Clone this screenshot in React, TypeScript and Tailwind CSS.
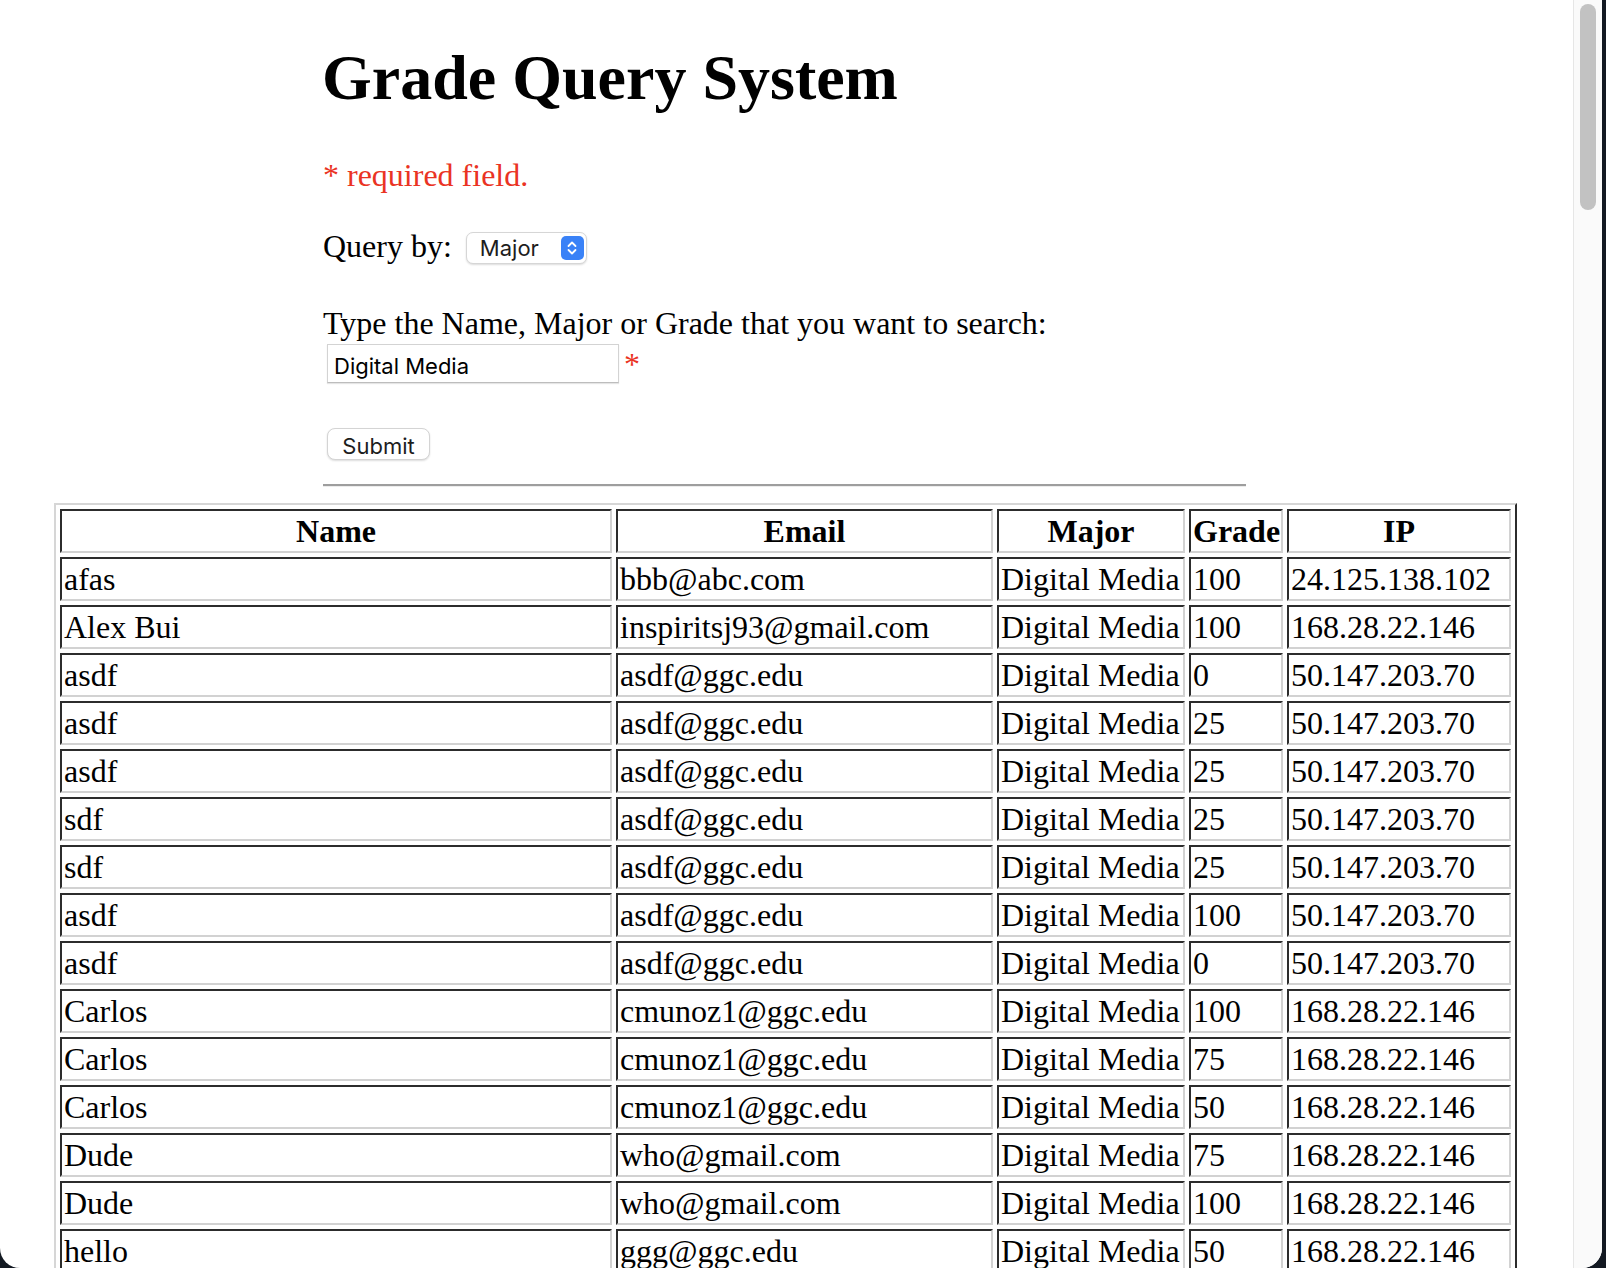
import React from "react";

const rows = [
    ["afas", "bbb@abc.com", "Digital Media", "100", "24.125.138.102"],
    ["Alex Bui", "inspiritsj93@gmail.com", "Digital Media", "100", "168.28.22.146"],
    ["asdf", "asdf@ggc.edu", "Digital Media", "0", "50.147.203.70"],
    ["asdf", "asdf@ggc.edu", "Digital Media", "25", "50.147.203.70"],
    ["asdf", "asdf@ggc.edu", "Digital Media", "25", "50.147.203.70"],
    ["sdf", "asdf@ggc.edu", "Digital Media", "25", "50.147.203.70"],
    ["sdf", "asdf@ggc.edu", "Digital Media", "25", "50.147.203.70"],
    ["asdf", "asdf@ggc.edu", "Digital Media", "100", "50.147.203.70"],
    ["asdf", "asdf@ggc.edu", "Digital Media", "0", "50.147.203.70"],
    ["Carlos", "cmunoz1@ggc.edu", "Digital Media", "100", "168.28.22.146"],
    ["Carlos", "cmunoz1@ggc.edu", "Digital Media", "75", "168.28.22.146"],
    ["Carlos", "cmunoz1@ggc.edu", "Digital Media", "50", "168.28.22.146"],
    ["Dude", "who@gmail.com", "Digital Media", "75", "168.28.22.146"],
    ["Dude", "who@gmail.com", "Digital Media", "100", "168.28.22.146"],
    ["hello", "ggg@ggc.edu", "Digital Media", "50", "168.28.22.146"],
];

const headers = [
    { label: "Name", width: "w-[552px]" },
    { label: "Email", width: "w-[377px]" },
    { label: "Major", width: "w-[188px]" },
    { label: "Grade", width: "w-[94px]" },
    { label: "IP", width: "w-[224px]" },
];

const cellBorder =
    "border-2 border-solid border-t-[#2c2c2c] border-l-[#2c2c2c] border-r-[#d2d2d2] border-b-[#d2d2d2] p-[2px] leading-[36px]";

function SelectControl() {
    return (
        <div className="ml-[14px] mt-[4px] flex h-[32px] w-[121px] items-center justify-between rounded-[7px] border border-[#d6d6d6] bg-white pl-[13px] pr-[2px] shadow-[0_1px_2px_rgba(0,0,0,0.14)] font-['Inter',sans-serif] text-[22px] text-[#1d1d1d]">
            <span>Major</span>
            <span className="flex h-[24px] w-[23px] items-center justify-center rounded-[5px] bg-[#3a82f7]">
                <svg width="12" height="16" viewBox="0 0 12 16" fill="none">
                    <path d="M2.5 6 L6 2.5 L9.5 6" stroke="white" strokeWidth="1.8" strokeLinecap="round" strokeLinejoin="round" />
                    <path d="M2.5 10 L6 13.5 L9.5 10" stroke="white" strokeWidth="1.8" strokeLinecap="round" strokeLinejoin="round" />
                </svg>
            </span>
        </div>
    );
}

export default function App() {
    return (
        <div className="flex h-[1268px] w-[1606px] overflow-hidden bg-[#131922]">
            {/* Browser window */}
            <div className="flex h-full w-[1602px] overflow-hidden rounded-b-[20px] bg-white">
                {/* Page */}
                <div className="flex-1 overflow-hidden font-['Liberation_Serif','Times_New_Roman',serif] text-black">
                    <div className="flex flex-col pl-[323px]">
                        <h1 className="-ml-[1px] mt-[41px] text-[64px] font-bold leading-[74px]">
                            Grade Query System
                        </h1>

                        <p className="mt-[42px] text-[32px] leading-[36px] text-[#ea3323]">
                            * required field.
                        </p>

                        <div className="mt-[35px] flex items-start">
                            <span className="text-[32px] leading-[36px]">Query by:</span>
                            <SelectControl />
                        </div>

                        <p className="mt-[41px] text-[32px] leading-[36px]">
                            Type the Name, Major or Grade that you want to search:
                        </p>

                        <div className="flex items-start">
                            <div className="ml-[4px] mt-[3px] flex h-[39px] w-[292px] items-center border border-[#d3d3d3] border-b-[#bdbdbd] bg-white pl-[6px] pt-[5px] shadow-[0_1px_1px_rgba(0,0,0,0.1)] font-['Inter',sans-serif] text-[22px] text-black">
                                Digital Media
                            </div>
                            <span className="ml-[5px] mt-[5px] text-[32px] leading-[36px] text-[#ea3323]">*</span>
                        </div>

                        <div className="ml-[4px] mt-[45px] flex h-[32px] w-[103px] items-center justify-center rounded-[8px] border border-[#d4d4d4] bg-white pt-[4px] shadow-[0_1px_2px_rgba(0,0,0,0.14)] font-['Inter',sans-serif] text-[22px] text-[#1d1d1d]">
                            Submit
                        </div>

                        <div className="mt-[24px] h-[3px] w-[923px] border-t-2 border-b border-t-[#9e9e9e] border-b-[#ececec]" />
                    </div>

                    <table className="ml-[54px] mt-[16px] w-[1463px] table-fixed border-separate border-spacing-[4px] border-2 border-solid border-t-[#d6d6d6] border-l-[#d6d6d6] border-r-[#2c2c2c] border-b-[#2c2c2c] text-[32px]">
                        <thead>
                            <tr>
                                {headers.map((h) => (
                                    <th key={h.label} className={`${h.width} ${cellBorder} text-center font-bold`}>
                                        {h.label}
                                    </th>
                                ))}
                            </tr>
                        </thead>
                        <tbody>
                            {rows.map((row, i) => (
                                <tr key={i}>
                                    {row.map((cell, j) => (
                                        <td key={j} className={`${cellBorder} whitespace-nowrap text-left`}>
                                            {cell}
                                        </td>
                                    ))}
                                </tr>
                            ))}
                        </tbody>
                    </table>
                </div>

                {/* Scrollbar */}
                <div className="flex w-[29px] shrink-0 flex-col border-l border-[#e6e6e6] bg-[#fafafa] pl-[6px] pr-[5px] pt-[4px]">
                    <div className="h-[206px] w-[16px] rounded-full bg-[#c2c2c2]" />
                </div>
            </div>
        </div>
    );
}
